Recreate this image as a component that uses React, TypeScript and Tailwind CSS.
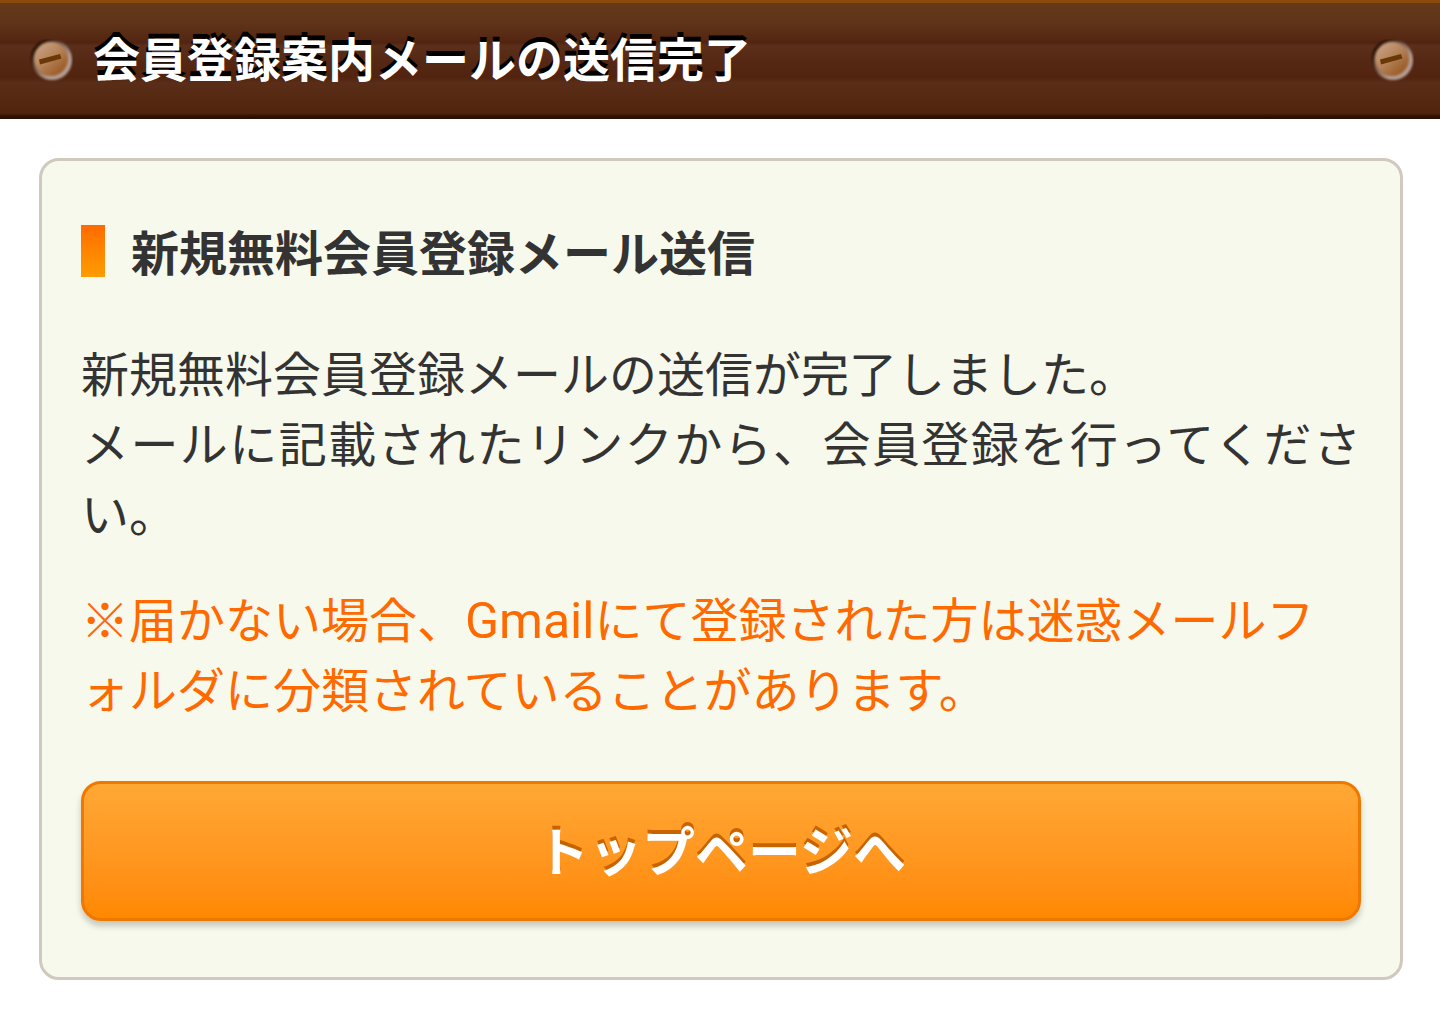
function Screw() {
  return (
    <svg viewBox="0 0 44 44" className="size-11 shrink-0" aria-hidden="true">
      <defs>
        <linearGradient id="screwFace" x1="0.1" y1="0.1" x2="0.8" y2="0.9">
          <stop offset="0" stopColor="#c9a283" />
          <stop offset="0.5" stopColor="#b58259" />
          <stop offset="1" stopColor="#9a5a24" />
        </linearGradient>
        <linearGradient id="screwRim" x1="0.1" y1="0.1" x2="0.8" y2="0.8">
          <stop offset="0" stopColor="#2c130a" />
          <stop offset="0.35" stopColor="#6b5043" />
          <stop offset="0.8" stopColor="#b39c93" />
          <stop offset="1" stopColor="#b39c93" />
        </linearGradient>
        <filter id="screwSoft" x="-20%" y="-20%" width="140%" height="140%">
          <feGaussianBlur stdDeviation="0.8" />
        </filter>
      </defs>
      <circle cx="20" cy="19" r="18" fill="#1e0b05" opacity="0.8" filter="url(#screwSoft)" />
      <circle cx="23" cy="21" r="20" fill="url(#screwRim)" filter="url(#screwSoft)" />
      <circle cx="22" cy="20" r="17" fill="url(#screwFace)" filter="url(#screwSoft)" />
      <path d="M10 20.5 L31 15 L32.5 19.5 L11 25.5 Z" fill="#693806" />
    </svg>
  );
}

function Header() {
  return (
    <header className="flex items-center justify-between border-t-3 border-[#8a4a0c] bg-[linear-gradient(#653a1a_0%,#5e3318_18%,#552712_32%,#512411_34%,#5b2f1a_37%,#552813_50%,#52240f_64%,#592d17_69%,#562812_85%,#51240e_95%,#2a0f02_98%,#2a0f02_100%)] py-6 pr-[26px] pl-[29px]">
      <div className="flex items-center gap-5">
        <Screw />
        <h1 className="text-[47px] leading-[68px] font-bold text-white [text-shadow:0_-5px_0_#000]">
          会員登録案内メールの送信完了
        </h1>
      </div>
      <Screw />
    </header>
  );
}

export default function App() {
  return (
    <div className="min-h-screen bg-white font-[Roboto,'Noto_Sans_CJK_JP',sans-serif] text-[#333]" lang="ja">
      <Header />
      <main className="py-[39px] pr-[37px] pl-[39px]">
        <section className="rounded-[20px] border-3 border-[#d0c9c0] bg-[#f7f9ec] px-[39px] pt-[52px] pb-14">
          <div className="flex items-center gap-[26px]">
            <span className="h-[52px] w-6 bg-linear-to-b from-[#ff6a00] to-[#ff9c00]" />
            <h2 className="pt-2 text-5xl leading-[68px] font-bold">新規無料会員登録メール送信</h2>
          </div>

          <div className="mt-[52px] text-5xl leading-[70px]">
            <p className="text-justify">
              新規無料会員登録メールの送信が完了しました。
              <br />
              メールに記載されたリンクから、会員登録を行ってください。
            </p>
            <p className="mt-[35px] text-[#ff6a00]">
              ※届かない場合、<span className="text-[50px]">Gmail</span>にて登録された方は迷惑メールフ
              <br />
              ォルダに分類されていることがあります。
            </p>
          </div>

          <a
            href="/"
            className="mt-[54px] block rounded-[20px] border-3 border-[#f07800] bg-linear-to-b from-[#ffa834] to-[#ff8800] pt-[35px] pb-[29px] text-center text-[53px] leading-[70px] font-bold text-white shadow-[0_5px_6px_rgba(0,0,0,0.2)] [text-shadow:0_-4px_0_#c86400]"
          >
            トップページへ
          </a>
        </section>
      </main>
    </div>
  );
}
